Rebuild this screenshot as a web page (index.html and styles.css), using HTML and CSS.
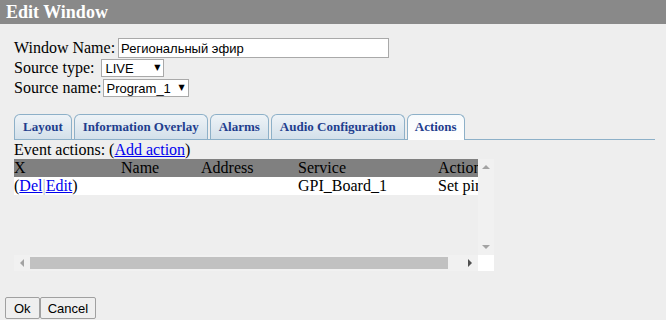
FILE: index.html
```html
<!DOCTYPE html>
<html lang="ru">
<head>
    <meta charset="UTF-8">
    <title>Edit Window</title>
    <link rel="stylesheet" href="styles.css">
</head>
<body>
    <div class="dialog-title">Edit Window</div>

    <div class="content">
        <div class="form">
            <div class="form-row">
                <label>Window Name:</label>
                <input type="text" class="text-input" value="Региональный эфир">
            </div>
            <div class="form-row">
                <label>Source type:</label>
                <span class="select-wrap type-select">
                    <select class="select"><option>LIVE</option></select>
                </span>
            </div>
            <div class="form-row">
                <label>Source name:</label>
                <span class="select-wrap name-select">
                    <select class="select"><option>Program_1</option></select>
                </span>
            </div>
        </div>

        <ul class="tabs">
            <li class="tab">Layout</li>
            <li class="tab">Information Overlay</li>
            <li class="tab">Alarms</li>
            <li class="tab">Audio Configuration</li>
            <li class="tab active">Actions</li>
        </ul>

        <div class="event-line">Event actions: (<a href="#">Add action</a>)</div>

        <div class="table-box">
            <div class="table-view">
                <table class="actions-table">
                    <tr class="head">
                        <td class="col-x">X</td>
                        <td class="col-name">Name</td>
                        <td class="col-addr">Address</td>
                        <td class="col-service">Service</td>
                        <td class="col-action">Action</td>
                    </tr>
                    <tr class="row">
                        <td>(<a href="#">Del</a><span class="sep">|</span><a href="#">Edit</a>)</td>
                        <td></td>
                        <td></td>
                        <td>GPI_Board_1</td>
                        <td>Set pin</td>
                    </tr>
                </table>
            </div>
            <div class="vscroll">
                <span class="arrow up"></span>
                <span class="arrow down"></span>
            </div>
            <div class="hscroll">
                <span class="arrow left"></span>
                <span class="thumb"></span>
                <span class="arrow right"></span>
            </div>
            <div class="corner"></div>
        </div>
    </div>

    <div class="buttons">
        <button class="btn">Ok</button><button class="btn btn-cancel">Cancel</button>
    </div>
</body>
</html>
```

FILE: styles.css
```css
body {
    margin: 0;
    background-color: #eeeeee;
    font-family: 'Liberation Serif', 'Times New Roman', serif;
    font-size: 16px;
    color: #000;
}
.dialog-title {
    height: 24px;
    line-height: 24px;
    background-color: #898989;
    color: #fff;
    font-weight: bold;
    font-size: 18px;
    padding-left: 6px;
}
.content {
    padding: 14px 11px 0 14px;
}
.form-row {
    display: flex;
    align-items: center;
    height: 20px;
}
.form-row label {
    line-height: 20px;
    margin-right: 3px;
}
.text-input {
    width: 271px;
    height: 20px;
    box-sizing: border-box;
    border: 1px solid #a9a9a9;
    padding: 0 2px;
    font-family: 'Liberation Sans', Arial, sans-serif;
    font-size: 13px;
    background: #fff;
}
.select-wrap {
    position: relative;
    display: inline-block;
    height: 18px;
}
.type-select {
    margin-left: 4px;
}
.type-select .select {
    width: 63px;
}
.name-select {
    margin-left: -2px;
}
.name-select .select {
    width: 86px;
}
.select {
    display: block;
    appearance: none;
    -webkit-appearance: none;
    height: 18px;
    box-sizing: border-box;
    border: 1px solid #a9a9a9;
    border-radius: 0;
    background: #fff;
    font-family: 'Liberation Sans', Arial, sans-serif;
    font-size: 13px;
    padding: 0 14px 0 3px;
    color: #000;
}
.select-wrap::after {
    content: "\25BC";
    position: absolute;
    right: 4px;
    top: 4px;
    font-size: 8px;
    line-height: 10px;
    pointer-events: none;
    font-family: 'DejaVu Sans', sans-serif;
}
.tabs {
    list-style: none;
    margin: 15px 0 0 0;
    padding: 0;
    display: flex;
    gap: 2px;
    border-bottom: 1px solid #8db0c8;
    height: 26px;
}
.tab {
    height: 25px;
    box-sizing: border-box;
    margin-top: 1px;
    padding: 0 8px;
    line-height: 24px;
    font-size: 13px;
    font-weight: bold;
    color: #1f3e8e;
    border: 1px solid #8db0c8;
    border-bottom: none;
    border-radius: 6px 6px 0 0;
    background: linear-gradient(#eef3f7, #d3e0ea);
}
.tab.active {
    height: 26px;
    padding: 0 7px;
    background: linear-gradient(#f7fafc, #ffffff);
}
.event-line {
    line-height: 18px;
    margin-top: 1px;
}
a {
    color: #0000ee;
}
.table-box {
    width: 480px;
    display: grid;
    grid-template-columns: 464px 16px;
    grid-template-rows: 96px 16px;
}
.table-view {
    overflow: hidden;
}
.vscroll {
    background: #f1f1f1;
    display: flex;
    flex-direction: column;
    justify-content: space-between;
}
.hscroll {
    background: #f1f1f1;
    display: flex;
    align-items: center;
}
.hscroll .thumb {
    flex: 1;
    height: 12px;
}
.thumb {
    background: #c1c1c1;
}
.corner {
    background: #fff;
}
.arrow {
    width: 16px;
    height: 16px;
    display: flex;
    align-items: center;
    justify-content: center;
}
.arrow::before {
    content: "";
    width: 0;
    height: 0;
    border-style: solid;
}
.arrow.up::before {
    border-width: 0 4px 4px 4px;
    border-color: transparent transparent #a3a3a3 transparent;
}
.arrow.down::before {
    border-width: 4px 4px 0 4px;
    border-color: #a3a3a3 transparent transparent transparent;
}
.arrow.left::before {
    border-width: 4px 4px 4px 0;
    border-color: transparent #a3a3a3 transparent transparent;
}
.arrow.right {
    margin-left: 14px;
}
.arrow.right::before {
    border-width: 4px 0 4px 4px;
    border-color: transparent transparent transparent #505050;
}
.actions-table {
    border-collapse: collapse;
    width: 480px;
    table-layout: fixed;
}
.actions-table td {
    padding: 0;
    height: 18px;
    line-height: 18px;
    white-space: nowrap;
    overflow: hidden;
}
.head {
    background-color: #808080;
}
.row {
    background-color: #fff;
}
.col-x { width: 107px; }
.col-name { width: 80px; }
.col-addr { width: 97px; }
.col-service { width: 140px; }
.col-action { width: 56px; }
.sep {
    color: #b5b5b5;
}
.buttons {
    padding: 26px 0 0 5px;
    display: flex;
}
.btn {
    height: 22px;
    padding: 0 8px;
    font-family: 'Liberation Sans', Arial, sans-serif;
    font-size: 13px;
    background: #efefef;
    border: 1px solid #a0a0a0;
    border-radius: 2px;
    color: #000;
}
.btn-cancel {
    padding: 0 7px;
}
```
